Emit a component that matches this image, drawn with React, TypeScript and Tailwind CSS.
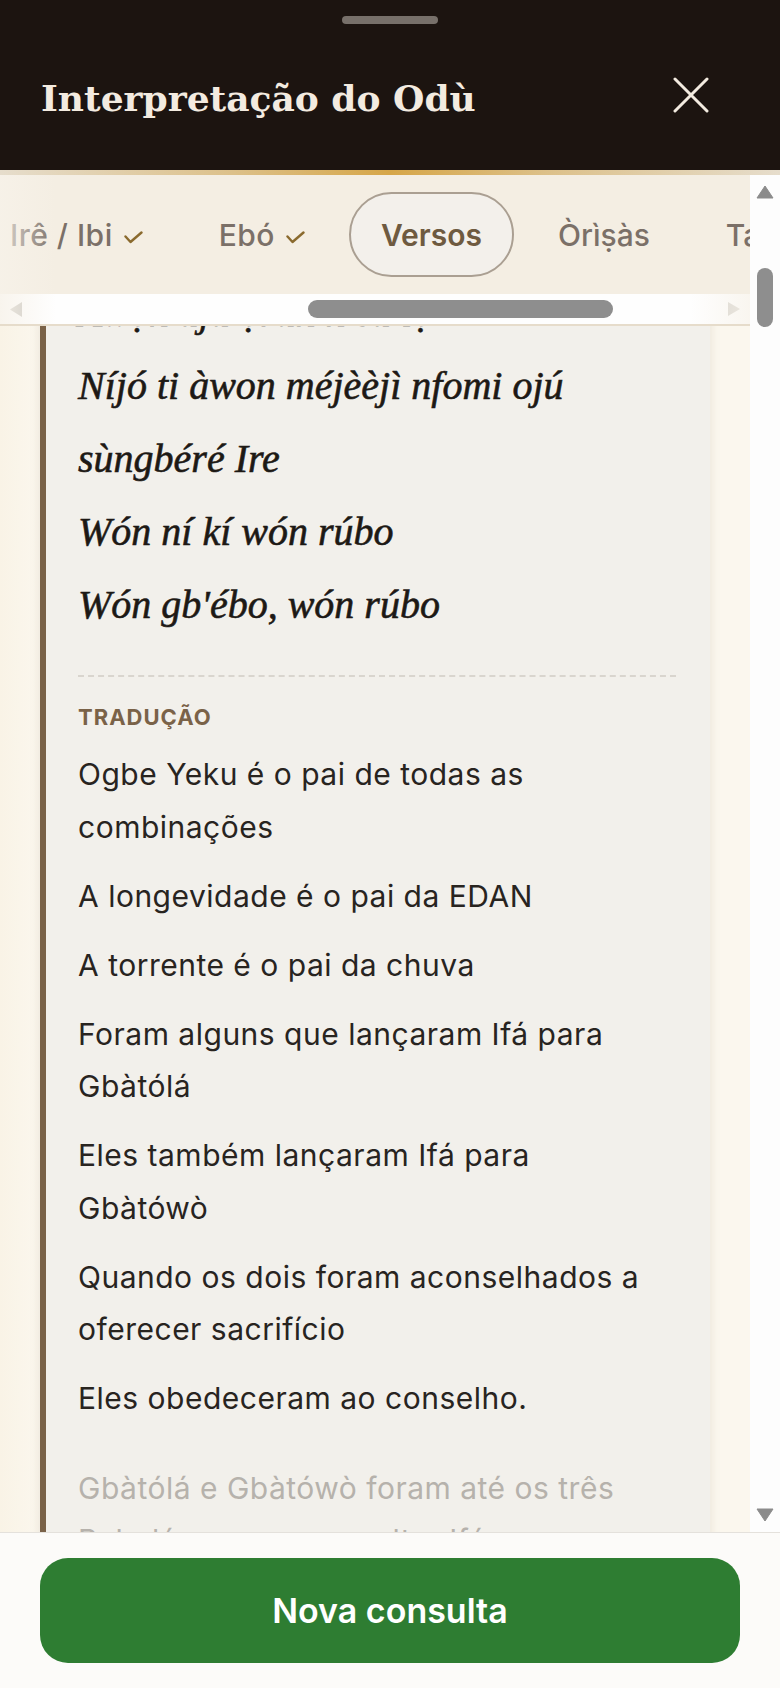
import React from "react";

const verses = [
  "Àwọn ajá ọ̀run ń sá lọ",
  "Níjó ti àwon méjèèjì nfomi ojú",
  "sùngbéré Ire",
  "Wón ní kí wón rúbo",
  "Wón gb'ébo, wón rúbo",
];

const translation: string[][] = [
  ["Ogbe Yeku é o pai de todas as", "combinações"],
  ["A longevidade é o pai da EDAN"],
  ["A torrente é o pai da chuva"],
  ["Foram alguns que lançaram Ifá para", "Gbàtólá"],
  ["Eles também lançaram Ifá para", "Gbàtówò"],
  ["Quando os dois foram aconselhados a", "oferecer sacrifício"],
  ["Eles obedeceram ao conselho."],
];

function Check() {
  return (
    <svg width="19" height="13" viewBox="0 0 19 13" className="ml-[11px] mt-[6px] shrink-0">
      <path d="M1.5 5.5 L6.5 11 L17.5 1.5" fill="none" stroke="#8a6a2e" strokeWidth="2.4" strokeLinecap="round" strokeLinejoin="round" />
    </svg>
  );
}

export default function App() {
  return (
    <div className="h-screen w-full flex flex-col overflow-hidden bg-[#fbf7ee] font-[Inter,sans-serif]">
      {/* Header */}
      <header className="h-[170px] shrink-0 bg-[#1c1410] flex flex-col">
        <div className="mt-[16px] mx-auto h-[8px] w-[96px] rounded-full bg-[#77706a]" />
        <div className="mt-[16px] h-[110px] flex items-center justify-between pl-[41px] pr-[71px]">
          <h1 className="pt-[5px] font-['DejaVu_Serif',serif] font-bold text-[36px] leading-[36px] text-[#f3ebe0]">
            Interpretação do Odù
          </h1>
          <svg width="36" height="36" viewBox="0 0 36 36">
            <path d="M2 2 L34 34 M34 2 L2 34" stroke="#f3ebe0" strokeWidth="3" strokeLinecap="round" />
          </svg>
        </div>
      </header>
      <div className="h-[5px] shrink-0 bg-[linear-gradient(90deg,#e6ddcc_0%,#dcc089_30%,#d6a648_50%,#dcc089_70%,#e6ddcc_100%)]" />

      {/* Middle */}
      <div className="flex flex-1 min-h-0">
        <div className="flex-1 min-w-0 flex flex-col">
          {/* Tabs */}
          <div className="relative shrink-0 bg-[#f4eee3] border-b-2 border-[#e6dccb]">
            <div className="h-[119px] overflow-hidden flex items-center">
              <div className="-ml-[22px] flex items-center gap-[12px] whitespace-nowrap text-[30px] leading-[36px]">
                <div className="h-[85px] px-[32px] flex items-center font-medium text-[#7b7068] tracking-[0.5px]">
                  <span>Irê / Ibi</span>
                  <Check />
                </div>
                <div className="h-[85px] px-[32px] flex items-center font-medium text-[#7b7068] tracking-[0.5px]">
                  <span>Ebó</span>
                  <Check />
                </div>
                <div className="h-[85px] px-[30px] flex items-center rounded-full border-2 border-[#aa9f92] bg-[#f3f0eb] font-semibold text-[#6e5a40]">
                  Versos
                </div>
                <div className="h-[85px] px-[32px] flex items-center font-medium text-[#7b7068]">Òrìṣàs</div>
                <div className="h-[85px] px-[32px] flex items-center font-medium text-[#7b7068]">Tabus</div>
              </div>
            </div>
            {/* horizontal scrollbar */}
            <div className="relative h-[30px] bg-[#fefefe] flex items-center px-[9px]">
              <svg width="14" height="17" viewBox="0 0 14 17" className="shrink-0">
                <path d="M13 1 L1 8.5 L13 16 Z" fill="#c6c3bd" />
              </svg>
              <div className="ml-[285px] w-[305px] h-[18px] rounded-full bg-[#8e8e8e] shrink-0" />
              <div className="flex-1" />
              <svg width="14" height="16" viewBox="0 0 14 16" className="shrink-0">
                <path d="M1 1 L13 8 L1 15 Z" fill="#d4d1cb" />
              </svg>
              <div className="pointer-events-none absolute right-0 top-0 bottom-0 w-[60px] bg-linear-to-l from-[#f7f2e9]/70 to-transparent" />
            </div>
            <div className="pointer-events-none absolute left-0 top-0 bottom-0 w-[56px] bg-linear-to-r from-[#f7f2e9]/80 to-transparent" />
          </div>

          {/* Content */}
          <div className="flex-1 min-h-0 overflow-hidden bg-[linear-gradient(90deg,#f9f3e6_0px,#fbf7ee_40px)]">
            <div className="-mt-[50px] ml-[40px] mr-[40px] border-l-[6px] border-[#7a6248] bg-[#f2f0eb] pl-[32px] pr-[34px] shadow-[0_2px_10px_rgba(120,100,70,0.14)]">
              <div className="font-['Liberation_Serif',serif] italic text-[40px] text-[#1d1915] [-webkit-text-stroke:0.6px_#1d1915]">
                {verses.map((v) => (
                  <p key={v} className="leading-[73px] whitespace-nowrap">{v}</p>
                ))}
              </div>
              <div className="mt-[34px] border-t-2 border-dashed border-[#d9d5ce]" />
              <div className="mt-[25px] text-[22px] leading-[30px] font-bold tracking-[1px] text-[#7a6248]">
                TRADUÇÃO
              </div>
              <div className="mt-[16px] text-[30px] leading-[52.5px] tracking-[0.5px] text-[#28241f]">
                {translation.map((lines, i) => (
                  <p key={i} className="mb-[16.5px]">
                    {lines.map((l) => (
                      <span key={l} className="block whitespace-nowrap">{l}</span>
                    ))}
                  </p>
                ))}
                <p className="mt-[37px] text-[#b6b2ac]">
                  <span className="block whitespace-nowrap">Gbàtólá e Gbàtówò foram até os três</span>
                  <span className="block whitespace-nowrap">Babaláwo para consultar Ifá</span>
                </p>
              </div>
            </div>
          </div>
        </div>

        {/* vertical scrollbar */}
        <div className="w-[30px] shrink-0 bg-[#fdfdfd] flex flex-col items-center pt-[10px] pb-[10px]">
          <svg width="18" height="14" viewBox="0 0 18 14" className="shrink-0">
            <path d="M9 1 L17 13 L1 13 Z" fill="#8b8b8b" strokeLinejoin="round" stroke="#8b8b8b" strokeWidth="1" />
          </svg>
          <div className="mt-[69px] w-[16px] h-[59px] rounded-full bg-[#8e8e8e] shrink-0" />
          <div className="flex-1" />
          <svg width="18" height="14" viewBox="0 0 18 14" className="shrink-0">
            <path d="M1 1 L17 1 L9 13 Z" fill="#8b8b8b" strokeLinejoin="round" stroke="#8b8b8b" strokeWidth="1" />
          </svg>
        </div>
      </div>

      {/* Footer */}
      <footer className="h-[156px] shrink-0 border-t border-[#e4e1dc] bg-[#fcfbf9] pt-[25px] px-[40px]">
        <button className="w-full h-[105px] rounded-[28px] bg-[#2e7d32] text-white text-[34px] font-semibold flex items-center justify-center">
          Nova consulta
        </button>
      </footer>
    </div>
  );
}
